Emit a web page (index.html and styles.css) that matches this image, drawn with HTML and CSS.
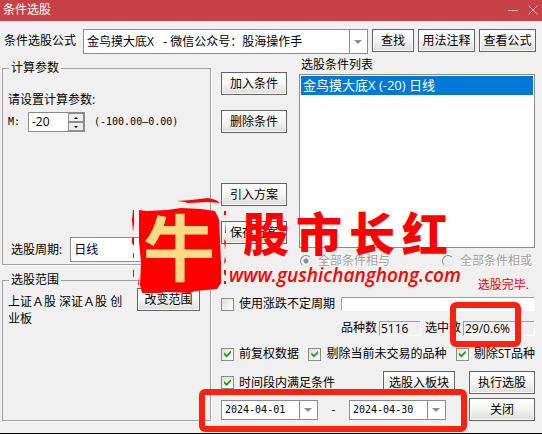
FILE: index.html
```
<!DOCTYPE html>
<html lang="zh-CN">
  <head>
    <meta charset="UTF-8" />
    <meta name="viewport" content="width=device-width, initial-scale=1.0" />
    <title>条件选股</title>
    <link rel="stylesheet" href="styles.css" />
  </head>
  <body>
    <div class="dialog">
      <header class="title-bar">
        <h1>条件选股</h1>
        <div class="window-buttons">
          <button type="button" aria-label="最小化">
            <svg viewBox="0 0 10 10"><path d="M0 5.5h10" /></svg>
          </button>
          <button type="button" aria-label="关闭窗口">
            <svg viewBox="0 0 10 10"><path d="M.5.5l9 9M9.5.5l-9 9" /></svg>
          </button>
        </div>
      </header>

      <div class="formula-row">
        <label for="formula">条件选股公式</label>
        <div class="combo formula-combo">
          <select id="formula">
            <option>金鸟摸大底X &nbsp; - 微信公众号：股海操作手</option>
          </select>
        </div>
        <button type="button" class="btn btn-find">查找</button>
        <button type="button" class="btn">用法注释</button>
        <button type="button" class="btn">查看公式</button>
      </div>

      <main class="content">
        <div class="left">
          <fieldset class="group params">
            <legend>计算参数</legend>
            <p>请设置计算参数:</p>
            <div class="param">
              <label for="param-m" class="mono">M:</label>
              <div class="spinner">
                <input id="param-m" type="text" value="-20" />
                <div class="spin-buttons">
                  <button type="button" class="spin-up" aria-label="增加"></button>
                  <button type="button" class="spin-down" aria-label="减少"></button>
                </div>
              </div>
              <span class="mono range">(-100.00—0.00)</span>
            </div>
            <div class="period">
              <label for="period">选股周期:</label>
              <div class="combo">
                <select id="period">
                  <option>日线</option>
                </select>
              </div>
            </div>
          </fieldset>

          <fieldset class="group scope">
            <legend>选股范围</legend>
            <div class="scope-row">
              <p>上证Ａ股 深证Ａ股 创业板</p>
              <button type="button" class="btn">改变范围</button>
            </div>
          </fieldset>
        </div>

        <div class="right">
          <div class="conditions">
            <div class="actions">
              <button type="button" class="btn">加入条件</button>
              <button type="button" class="btn">删除条件</button>
              <button type="button" class="btn btn-import">引入方案</button>
              <button type="button" class="btn">保存方案</button>
            </div>
            <div class="list-panel">
              <div id="list-label" class="list-label">选股条件列表</div>
              <div class="list" role="listbox" aria-labelledby="list-label" tabindex="0">
                <div class="list-item" role="option" aria-selected="true">金鸟摸大底X (-20) 日线</div>
              </div>
              <div class="radios">
                <label><input type="radio" name="join" checked disabled />全部条件相与</label>
                <label><input type="radio" name="join" disabled />全部条件相或</label>
              </div>
            </div>
          </div>

          <div class="status">选股完毕.</div>

          <div class="cycle-row">
            <label class="check"><input type="checkbox" />使用涨跌不定周期</label>
            <input class="cycle-input" type="text" aria-label="周期" />
          </div>

          <div class="counts">
            <label for="total">品种数</label>
            <input id="total" class="total" type="text" value="5116" readonly />
            <label for="picked">选中数</label>
            <div class="picked">
              <input id="picked" type="text" value="29/0.6%" readonly />
              <div class="mark mark-picked"></div>
            </div>
          </div>

          <div class="filters">
            <label class="check"><input type="checkbox" checked />前复权数据</label>
            <label class="check"><input type="checkbox" checked />剔除当前未交易的品种</label>
            <label class="check"><input type="checkbox" checked />剔除ST品种</label>
          </div>

          <div class="run-row">
            <label class="check"><input type="checkbox" checked />时间段内满足条件</label>
            <button type="button" class="btn btn-block">选股入板块</button>
            <button type="button" class="btn btn-run">执行选股</button>
          </div>

          <div class="date-row">
            <div class="combo date">
              <select class="mono" aria-label="开始日期">
                <option>2024-04-01</option>
              </select>
            </div>
            <span class="dash">-</span>
            <div class="combo date">
              <select class="mono" aria-label="结束日期">
                <option>2024-04-30</option>
              </select>
            </div>
            <button type="button" class="btn btn-run">关闭</button>
            <div class="mark mark-dates"></div>
          </div>
        </div>
      </main>

      <div class="watermark">
        <div class="stamp">
          <svg viewBox="0 0 94 96" aria-hidden="true">
            <path d="M7 13l8 1 20-1 14-2 20 1 14 2 4 8 1 20 1 24v20l-4 6-22 2-5 2-24-1-11 2-13-1-2-8 1-22-2-22z" />
            <path d="M45 4l14-1 17-2 8 2 4 3-12-1-20 1-4-1z" />
            <path d="M1 13h1v14l-1 8-1-12zM0 41l2-1v9l-2-3zM1 56h1v5H1zM1 73h1v8l-1-2zM6 80l1 8H6z" />
            <path d="M92 14h2v4h-2zM93 24l1 12h-1zM92 42l2 3-1 8zM93 59l1 5-2 3zM92 73h2v6l-2-2zM92 84h2v3h-2z" />
          </svg>
          <span class="stamp-char">牛</span>
        </div>
        <div class="brand">
          <div class="brand-name"><span>股</span><span>市</span><span>长</span><span>红</span></div>
          <div class="brand-url">www.gushichanghong.com</div>
        </div>
      </div>
    </div>
  </body>
</html>
```
FILE: styles.css
```
* {
  box-sizing: border-box;
}

body {
  margin: 0;
  background: #f0f0f0;
  color: #000;
  font-family: "Open Sans", "Noto Sans CJK SC", sans-serif;
  font-size: 12px;
  line-height: 16px;
}

p {
  margin: 0;
}

button,
input,
select {
  font: inherit;
  color: inherit;
}

.mono {
  font-family: "DejaVu Sans Mono", "Noto Sans CJK SC", monospace;
  font-size: 10px;
}

.dialog {
  position: relative;
  min-height: 100vh;
  border-bottom: 1px solid #000;
  overflow: hidden;
}

/* title bar */
.title-bar {
  display: flex;
  align-items: center;
  justify-content: space-between;
  height: 21px;
  padding: 0 4px 2px 3px;
  background: #c84146;
  color: #fff;
}

.title-bar h1 {
  margin: 0;
  font-size: 12px;
  font-weight: 400;
}

.window-buttons {
  display: flex;
  gap: 10px;
}

.window-buttons button {
  display: flex;
  padding: 0;
  border: 0;
  background: none;
}

.window-buttons svg {
  width: 10px;
  height: 10px;
  fill: none;
  stroke: #e8b4b6;
}

/* shared controls */
.btn {
  flex: none;
  height: 23px;
  padding: 0 3px;
  border: 1px solid #646464;
  background: linear-gradient(#fff, #f4f4f3 50%, #dfddd8);
  box-shadow: inset 0 0 0 1px #fafafa;
  line-height: 20px;
  white-space: nowrap;
}

.combo {
  position: relative;
  height: 25px;
  border: 1px solid #8c8c8c;
  background: #fff;
}

.combo select {
  display: block;
  width: 100%;
  height: 100%;
  padding: 0 20px 0 3px;
  border: 0;
  border-radius: 0;
  background: none;
  appearance: none;
}

.combo::before,
.combo::after {
  content: "";
  position: absolute;
  pointer-events: none;
}

.combo::before {
  top: 0;
  bottom: 0;
  right: 17px;
  border-left: 1px solid #8c8c8c;
}

.combo::after {
  top: 50%;
  right: 5px;
  margin-top: -2px;
  border: 4px solid transparent;
  border-top-color: #8c8c8c;
  border-bottom: 0;
}

.check {
  display: flex;
  align-items: center;
  gap: 5px;
  white-space: nowrap;
}

.check input {
  flex: none;
  position: relative;
  width: 13px;
  height: 13px;
  margin: 0;
  border: 1px solid #8c8c8c;
  background: linear-gradient(135deg, #deded8, #fff);
  appearance: none;
}

.check input:checked::after {
  content: "";
  position: absolute;
  inset: 2px;
  background: #21a121;
  clip-path: polygon(0 30%, 38% 62%, 100% 0, 100% 36%, 38% 100%, 0 66%);
}

/* formula row */
.formula-row {
  display: flex;
  padding: 8px 6px 0 4px;
}

.formula-row label {
  padding-top: 4px;
  margin-right: 7px;
}

.formula-combo {
  flex: 1;
  min-width: 0;
}

.formula-row .btn {
  width: 57px;
  margin-left: 4px;
}

.formula-row .btn-find {
  width: 42px;
}

/* columns */
.content {
  display: flex;
  gap: 10px;
  padding: 3px 7px 8px 2px;
}

.left {
  display: flex;
  flex-direction: column;
  gap: 7px;
  width: 209px;
  padding-top: 3px;
}

.right {
  flex: 1;
  min-width: 0;
}

/* group boxes */
.group {
  min-width: 0;
  margin: 0;
  padding: 0 7px 2px 5px;
  border: 1px solid #a0a0a0;
  box-shadow: 1px 1px 0 #fff;
}

.group legend {
  margin-left: 1px;
  padding: 0 2px;
  line-height: 16px;
}

.params p {
  padding-top: 16px;
}

.param {
  display: flex;
  align-items: center;
  margin-top: 4px;
}

.param label {
  width: 20px;
}

.spinner {
  display: flex;
  width: 57px;
  height: 20px;
  border: 1px solid #8c8c8c;
  background: #fff;
}

.spinner input {
  flex: 1;
  min-width: 0;
  padding: 0 3px;
  border: 0;
  background: none;
}

.spin-buttons {
  display: flex;
  flex-direction: column;
  width: 16px;
}

.spin-buttons button {
  display: flex;
  flex: 1;
  align-items: center;
  justify-content: center;
  padding: 0;
  border: 1px solid #8c8c8c;
  background: #eee;
}

.spin-buttons button::after {
  content: "";
  border: 2px solid transparent;
}

.spin-buttons .spin-up::after {
  border-top-width: 0;
  border-bottom-color: #000;
}

.spin-buttons .spin-down::after {
  border-bottom-width: 0;
  border-top-color: #000;
}

.range {
  margin-left: 9px;
}

.period {
  display: flex;
  align-items: center;
  gap: 8px;
  margin-top: 105px;
  padding-left: 3px;
}

.period .combo {
  flex: 1;
}

.scope {
  flex: 1;
}

.scope-row {
  display: flex;
  justify-content: space-between;
  padding-right: 3px;
}

.scope-row p {
  width: 120px;
  padding-top: 5px;
  line-height: 17px;
}

.scope-row .btn {
  width: 63px;
}

/* condition list */
.conditions {
  display: flex;
  gap: 12px;
}

.actions {
  display: flex;
  flex-direction: column;
  gap: 15px;
  padding-top: 15px;
}

.actions .btn {
  width: 66px;
}

.actions .btn-import {
  margin-top: 35px;
}

.list-panel {
  flex: 1;
  min-width: 0;
}

.list-label {
  padding-left: 2px;
}

.list {
  height: 174px;
  margin-top: 1px;
  padding: 1px;
  border: 1px solid #8c8c8c;
  background: #fff;
}

.list-item {
  padding-left: 2px;
  background: #0078d7;
  color: #fff;
  font-size: 13px;
  line-height: 19px;
}

.radios {
  display: flex;
  justify-content: space-between;
  padding: 5px 3px 0 1px;
  color: #a0a0a0;
  text-shadow: 1px 1px 0 #fff;
}

.radios label {
  display: flex;
  align-items: center;
  gap: 6px;
}

.radios input {
  width: 12px;
  height: 12px;
  margin: 0;
  border: 1px solid #8c8c8c;
  border-right-color: #e3e3e3;
  border-bottom-color: #e3e3e3;
  border-radius: 50%;
  appearance: none;
}

.radios input:checked {
  background: radial-gradient(#8c8c8c 2px, transparent 3px);
}

.status {
  padding: 8px 6px 0 0;
  color: #e60000;
  text-align: right;
}

.cycle-row {
  display: flex;
  align-items: center;
  gap: 6px;
  margin-top: 3px;
}

.cycle-input,
.counts input {
  min-width: 0;
  height: 14px;
  padding: 0 1px;
  border: 1px solid #fff;
  border-top-color: #a0a0a0;
  border-left-color: #a0a0a0;
}

.cycle-input {
  flex: 1;
  background: #fff;
}

.counts {
  display: flex;
  align-items: center;
  justify-content: flex-end;
  margin-top: 8px;
}

.counts label {
  margin-right: 2px;
}

.counts input {
  display: block;
  height: 15px;
  background: #f0f0f0;
  line-height: 13px;
}

.counts .total {
  width: 42px;
  margin-right: 4px;
}

.picked {
  position: relative;
  width: 72px;
}

.picked input {
  width: 100%;
}

.filters {
  display: flex;
  justify-content: space-between;
  margin-top: 10px;
}

.run-row {
  display: flex;
  align-items: center;
  margin-top: 9px;
}

.run-row .btn-block {
  width: 72px;
  margin-left: auto;
}

.btn-run {
  width: 66px;
}

.run-row .btn-run {
  margin-left: 14px;
}

.date-row {
  position: relative;
  display: flex;
  align-items: center;
  margin-top: 4px;
}

.date {
  width: 97px;
  height: 20px;
}

.dash {
  width: 31px;
  text-align: center;
}

.date-row .btn-run {
  margin-left: auto;
}

/* red marker frames */
.mark {
  position: absolute;
  border: 6px solid #ff2011;
  border-radius: 6px;
  pointer-events: none;
}

.mark-picked {
  top: -19px;
  left: -13px;
  width: 71px;
  height: 45px;
}

.mark-dates {
  top: -9px;
  left: -22px;
  width: 268px;
  height: 43px;
}

/* watermark */
.watermark {
  position: absolute;
  top: 197px;
  left: 131px;
  display: flex;
  color: #fe0000;
  pointer-events: none;
}

.stamp {
  position: relative;
  width: 96px;
  height: 96px;
}

.stamp svg {
  display: block;
  width: 96px;
  height: 96px;
  fill: #fe0000;
}

.stamp-char {
  position: absolute;
  inset: 4px 0 0;
  color: #f8dc85;
  font-size: 72px;
  font-weight: 700;
  line-height: 92px;
  text-align: center;
}

.brand-name {
  display: flex;
  gap: 7px;
  padding: 8px 0 0 16px;
  font-size: 46px;
  font-weight: 900;
  line-height: 56px;
}

.brand-url {
  padding-left: 2px;
  font-size: 19px;
  font-style: italic;
  font-weight: 600;
  line-height: 28px;
}
```
